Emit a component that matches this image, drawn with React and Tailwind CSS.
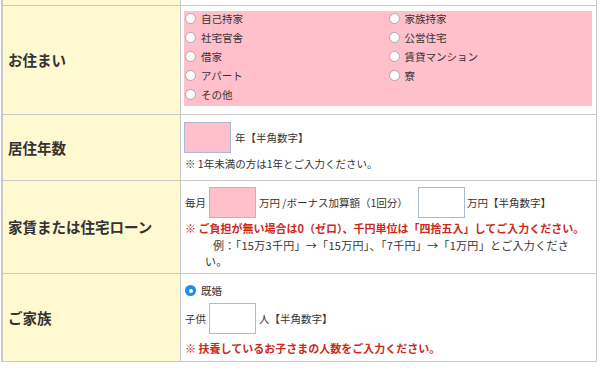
import React from "react";

const jp = "font-['Noto_Sans_CJK_JP','Liberation_Sans',sans-serif]";

const Radio = ({ checked }) =>
  checked ? (
    <span className="w-[11px] h-[11px] rounded-full bg-[#1d8df5] flex items-center justify-center shrink-0">
      <span className="w-[4px] h-[4px] rounded-full bg-white" />
    </span>
  ) : (
    <span className="w-[11px] h-[11px] rounded-full bg-white border border-[#a9a9a9] shrink-0" />
  );

const Option = ({ label, checked }) => (
  <label className="flex items-center gap-[5px] h-[13px] leading-[13px]">
    <Radio checked={checked} />
    <span>{label}</span>
  </label>
);

const Box = ({ pink }) => (
  <span
    className={
      "block w-[47px] h-[31px] border border-[#a8bbd0] shrink-0 " +
      (pink ? "bg-[#ffc0cb]" : "bg-white")
    }
  />
);

const Row = ({ label, height, children, top = true }) => (
  <div
    className={
      "grid grid-cols-[177px_1fr] " +
      height +
      (top ? " border-t border-[#c9c9c9]" : "")
    }
  >
    <div className="bg-[#fff9d2] flex items-center pl-[5px] text-[14.5px] font-bold text-[#333]">
      {label}
    </div>
    <div className="border-l border-[#c9c9c9] bg-white">{children}</div>
  </div>
);

const housing = [
  ["自己持家", "家族持家"],
  ["社宅官舎", "公営住宅"],
  ["借家", "賃貸マンション"],
  ["アパート", "寮"],
  ["その他", null],
];

export default function App() {
  return (
    <div className={"w-[600px] h-[368px] bg-white pl-[1px] " + jp}>
      <div className="w-[596px] border-l-2 border-r border-b border-[#c9c9c9] text-[10.5px] text-[#333]">
        <Row label="" height="h-[5px]" top={false} />

        <Row label="お住まい" height="h-[109px]">
          <div className="pt-[5px] pl-[3px] pr-[4px]">
            <div className="bg-[#ffc0cb] h-[95px] pt-[1px] pl-[1px]">
              <div className="grid grid-cols-2 gap-y-[6px]">
                {housing.map(([a, b]) => (
                  <React.Fragment key={a}>
                    <Option label={a} />
                    {b ? <Option label={b} /> : <span />}
                  </React.Fragment>
                ))}
              </div>
            </div>
          </div>
        </Row>

        <Row label="居住年数" height="h-[66px]">
          <div className="pt-[7px] pl-[3px]">
            <div className="flex items-center gap-[4px]">
              <Box pink />
              <span>年【半角数字】</span>
            </div>
            <p className="mt-[3px] leading-[16px] pl-[1px]">
              ※ 1年未満の方は1年とご入力ください。
            </p>
          </div>
        </Row>

        <Row label="家賃または住宅ローン" height="h-[93px]">
          <div className="pt-[6px] pl-[4px] pr-[10px]">
            <div className="flex items-center">
              <span className="mr-[3px]">毎月</span>
              <Box pink />
              <span className="ml-[3px] w-[159px]">万円 /ボーナス加算額（1回分）</span>
              <Box />
              <span className="ml-[2px]">万円【半角数字】</span>
            </div>
            <p className="mt-[2px] leading-[17px] text-[11px] text-[#cc2a1c] font-bold">
              ※ ご負担が無い場合は0（ゼロ）、千円単位は「四捨五入」してご入力ください。
            </p>
            <p className="leading-[16px] text-[11px] tracking-[0.3px] pl-[20px] indent-[8px]">
              例：「15万3千円」→「15万円」、「7千円」→「1万円」とご入力くださ
              <br />
              い。
            </p>
          </div>
        </Row>

        <Row label="ご家族" height="h-[88px]">
          <div className="pt-[10px] pl-[4px]">
            <Option label="既婚" checked />
            <div className="flex items-center mt-[6px]">
              <span className="mr-[3px]">子供</span>
              <Box />
              <span className="ml-[3px]">人【半角数字】</span>
            </div>
            <p className="mt-[6px] leading-[17px] text-[11px] text-[#cc2a1c] font-bold">
              ※ 扶養しているお子さまの人数をご入力ください。
            </p>
          </div>
        </Row>
      </div>
    </div>
  );
}
